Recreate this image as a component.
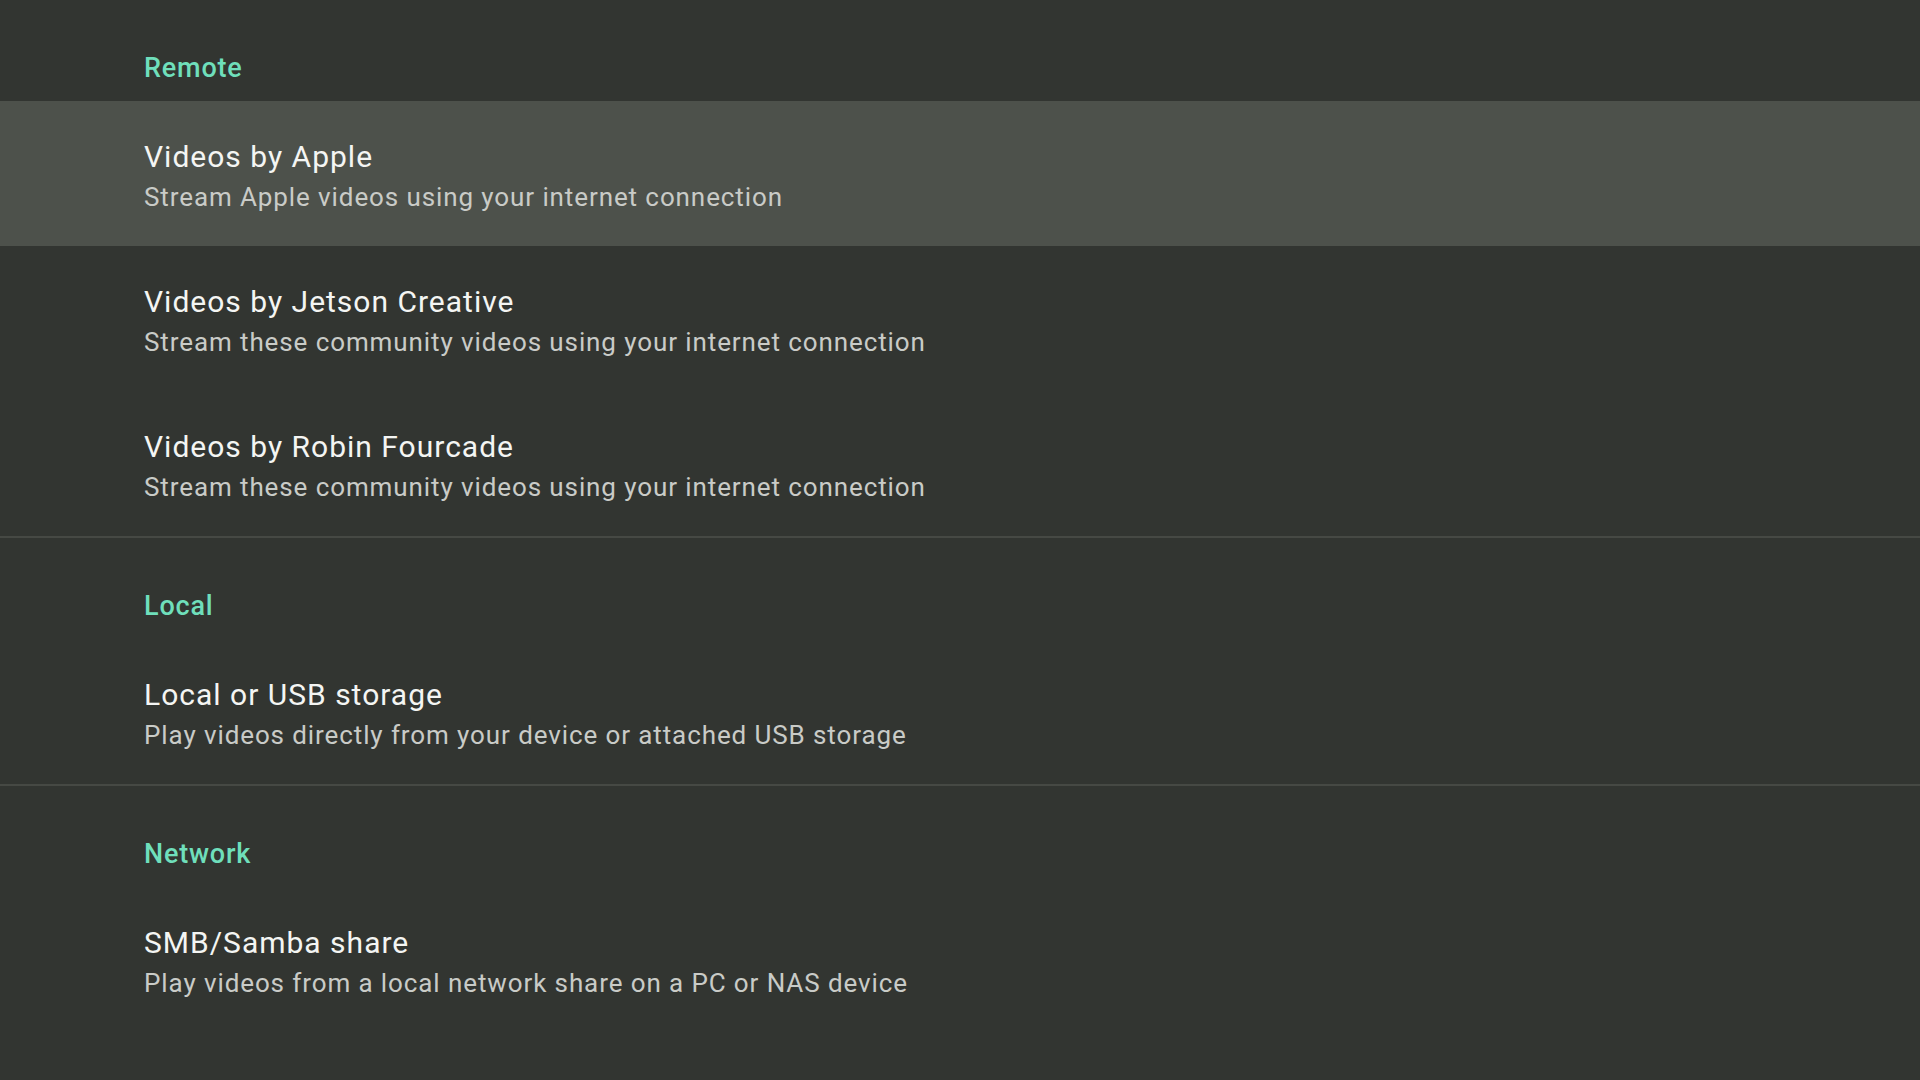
import React from "react";

type Item = { title: string; subtitle: string; focused?: boolean };
type Section = { header: string; items: Item[] };

const sections: Section[] = [
  {
    header: "Remote",
    items: [
      { title: "Videos by Apple", subtitle: "Stream Apple videos using your internet connection", focused: true },
      { title: "Videos by Jetson Creative", subtitle: "Stream these community videos using your internet connection" },
      { title: "Videos by Robin Fourcade", subtitle: "Stream these community videos using your internet connection" },
    ],
  },
  {
    header: "Local",
    items: [
      { title: "Local or USB storage", subtitle: "Play videos directly from your device or attached USB storage" },
    ],
  },
  {
    header: "Network",
    items: [
      { title: "SMB/Samba share", subtitle: "Play videos from a local network share on a PC or NAS device" },
    ],
  },
];

export default function App() {
  return (
    <div
      className="w-full h-[1080px] overflow-hidden bg-[#323531]"
      style={{ fontFamily: "Roboto, 'Liberation Sans', sans-serif" }}
    >
      {sections.map((s, si) => (
        <div key={s.header}>
          {si > 0 && <div className="h-[2px] bg-[#464944]" />}
          <div className="pl-[144px] pt-[51px] pb-[16px] h-[101px]">
            <div className="text-[27px] leading-[34px] font-medium tracking-[0.8px] text-[#6fdfbb]">{s.header}</div>
          </div>
          {s.items.map((it) => (
            <div
              key={it.title}
              className={`h-[145px] pl-[144px] pt-[36px] ${it.focused ? "bg-[#4d514b]" : ""}`}
            >
              <div className="text-[30px] leading-[40px] tracking-[1px] text-[#f4f5f3]">{it.title}</div>
              <div className="text-[26px] leading-[40px] tracking-[0.9px] text-[#c9cbc7]">{it.subtitle}</div>
            </div>
          ))}
        </div>
      ))}
    </div>
  );
}
